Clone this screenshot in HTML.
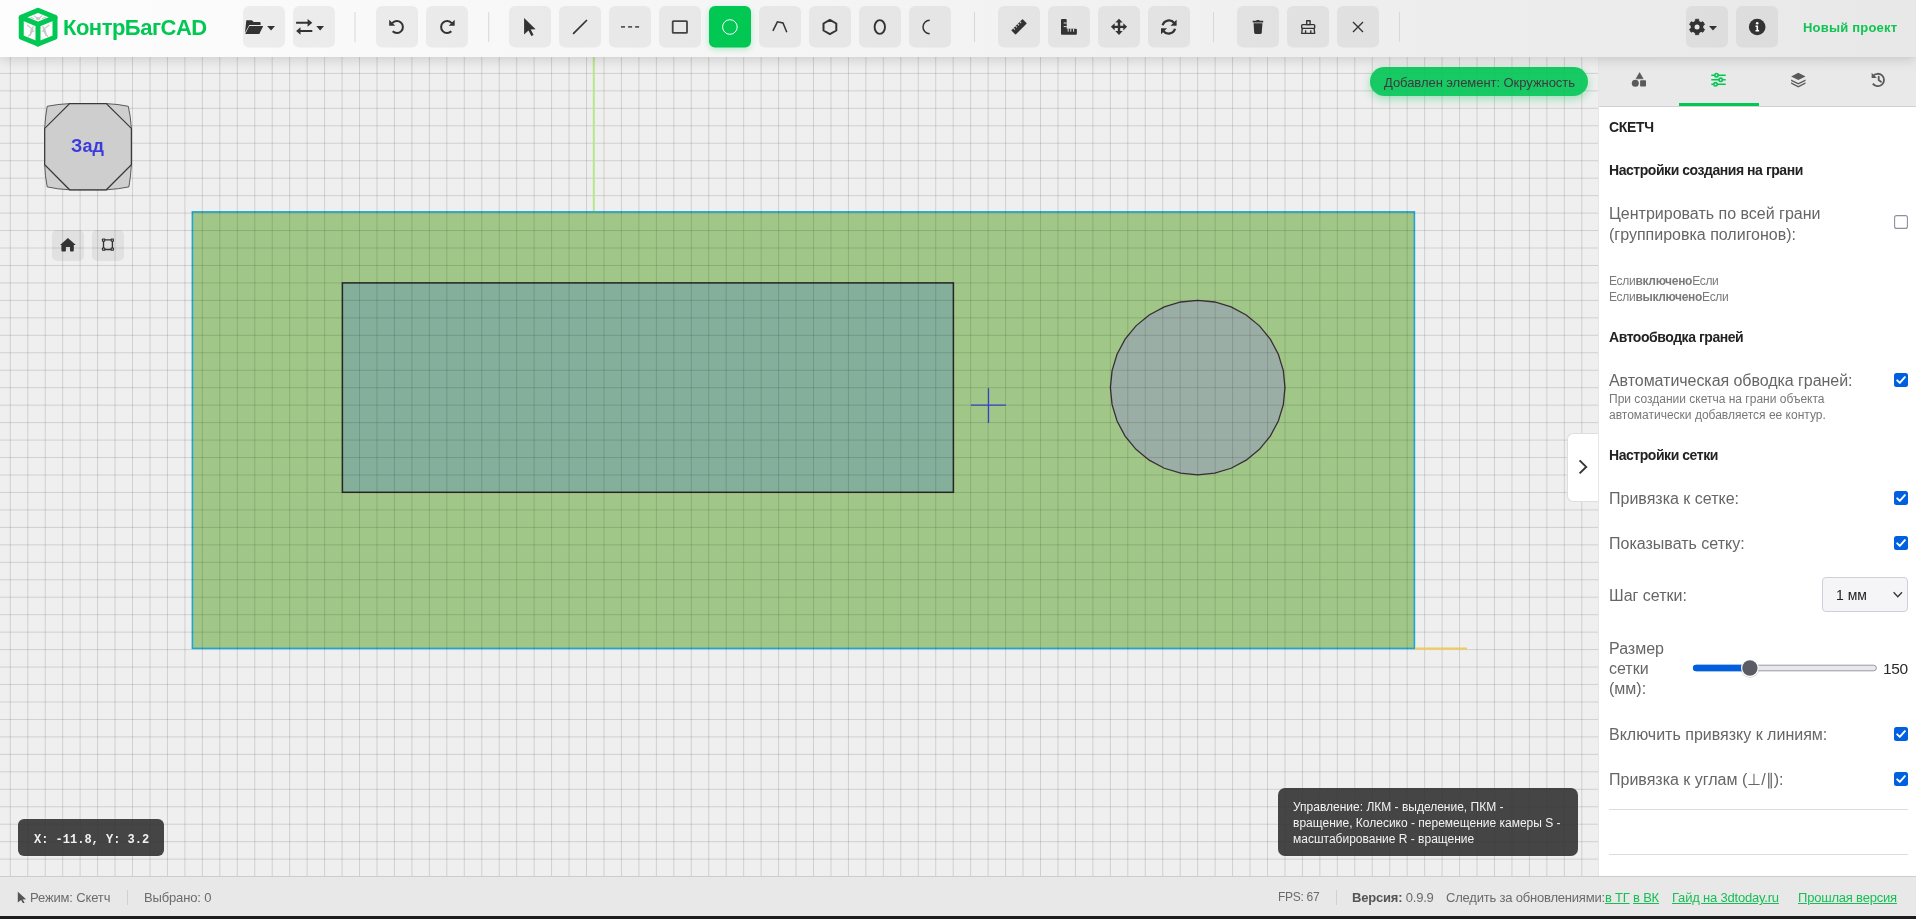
<!DOCTYPE html>
<html><head><meta charset="utf-8"><title>КонтрБагCAD</title><style>
*{box-sizing:border-box}
html,body{margin:0;padding:0;width:1916px;height:919px;overflow:hidden;background:#efefef;font-family:"Liberation Sans",sans-serif}
.t{position:absolute;white-space:nowrap;will-change:transform}
a{color:#16bf55;text-decoration:underline}
#hdr{position:absolute;left:0;top:0;width:1916px;height:57px;background:linear-gradient(90deg,#fdfdfd 0%,#f3f3f3 50%,#e8e8e8 100%);box-shadow:0 2px 12px rgba(0,0,0,0.16);z-index:5}
.logo-t{position:absolute;left:62.9px;top:15.4px;font-size:22px;line-height:26px;font-weight:bold;color:#00c853;letter-spacing:-0.5px;will-change:transform}
.newp{position:absolute;left:1803.2px;top:19px;font-size:13px;line-height:18px;font-weight:bold;color:#10c452;letter-spacing:0.2px;will-change:transform}
#pnl{position:absolute;left:1598px;top:57px;width:318px;height:819px;background:#fff;border-left:1px solid #e6e6e6}
#tabs{position:absolute;left:0;top:0;width:317px;height:49.5px;background:#e9e9e9;border-bottom:1px solid #d2d2d2}
#tabline{position:absolute;left:79.5px;top:46px;width:80px;height:3px;background:#00c853}
.cb{position:absolute}
#sel{position:absolute;left:1822.4px;top:577.3px;width:85.5px;height:34.4px;background:#f5f5f7;border:1px solid #cfcfd8;border-radius:4px}
.hr{position:absolute;left:1609px;width:299px;height:1px;background:#dcdcdc}
.vb{position:absolute;width:32px;height:31.5px;border-radius:5px;background:rgba(0,0,0,0.055)}
#note{position:absolute;left:1370.1px;top:67.2px;width:217.7px;height:28.5px;border-radius:14.25px;background:rgba(0,197,83,0.9);box-shadow:0 3px 10px rgba(0,190,80,0.35)}
#exp{position:absolute;left:1567px;top:432.5px;width:32px;height:69px;background:#fff;border:1px solid #dedede;border-right:none;border-radius:6px 0 0 6px}
#coord{position:absolute;left:18.2px;top:819.2px;width:145.7px;height:36.5px;border-radius:6px;background:rgba(50,50,50,0.9)}
#help{position:absolute;left:1278px;top:788.4px;width:300px;height:67.2px;border-radius:7px;background:rgba(50,50,50,0.9)}
#status{position:absolute;left:0;top:876px;width:1916px;height:39.5px;background:#e8e8e8;border-top:1px solid #cdcdcd}
#bottomline{position:absolute;left:0;top:915.5px;width:1916px;height:4px;background:#1d1d1d}
.vsep{position:absolute;top:890px;width:1px;height:15px;background:#d0d0d0}
</style></head>
<body>

<svg id="cv" width="1598" height="876" viewBox="0 0 1598 876" style="position:absolute;left:0;top:0">
 <rect x="0" y="0" width="1598" height="876" fill="#efefef"/>
 <rect x="192.4" y="211.9" width="1222" height="436.5" fill="#8bbb6a" fill-opacity="0.78" />
 <rect x="342.4" y="282.9" width="611" height="209.4" fill="#6f9fa8" fill-opacity="0.6" />
 <polygon points="1197.70,300.30 1214.73,301.98 1231.11,306.95 1246.20,315.01 1259.43,325.87 1270.29,339.10 1278.35,354.19 1283.32,370.57 1285.00,387.60 1283.32,404.63 1278.35,421.01 1270.29,436.10 1259.43,449.33 1246.20,460.19 1231.11,468.25 1214.73,473.22 1197.70,474.90 1180.67,473.22 1164.29,468.25 1149.20,460.19 1135.97,449.33 1125.11,436.10 1117.05,421.01 1112.08,404.63 1110.40,387.60 1112.08,370.57 1117.05,354.19 1125.11,339.10 1135.97,325.87 1149.20,315.01 1164.29,306.95 1180.67,301.98" fill="#9aa5b0" fill-opacity="0.75"/>
 <rect x="192.4" y="211.9" width="1222" height="436.5" fill="none" stroke="#1ea5d2" stroke-width="1.6"/>
 <rect x="342.4" y="282.9" width="611" height="209.4" fill="none" stroke="#2a2a2a" stroke-width="1.5"/>
 <polygon points="1197.70,300.30 1214.73,301.98 1231.11,306.95 1246.20,315.01 1259.43,325.87 1270.29,339.10 1278.35,354.19 1283.32,370.57 1285.00,387.60 1283.32,404.63 1278.35,421.01 1270.29,436.10 1259.43,449.33 1246.20,460.19 1231.11,468.25 1214.73,473.22 1197.70,474.90 1180.67,473.22 1164.29,468.25 1149.20,460.19 1135.97,449.33 1125.11,436.10 1117.05,421.01 1112.08,404.63 1110.40,387.60 1112.08,370.57 1117.05,354.19 1125.11,339.10 1135.97,325.87 1149.20,315.01 1164.29,306.95 1180.67,301.98" fill="none" stroke="#3a2f36" stroke-width="1.3"/>
 <path d="M10.30 57V876M27.76 57V876M45.22 57V876M62.68 57V876M80.14 57V876M97.60 57V876M115.07 57V876M132.53 57V876M149.99 57V876M167.45 57V876M184.91 57V876M202.37 57V876M219.83 57V876M237.29 57V876M254.75 57V876M272.21 57V876M289.68 57V876M307.14 57V876M324.60 57V876M342.06 57V876M359.52 57V876M376.98 57V876M394.44 57V876M411.90 57V876M429.36 57V876M446.82 57V876M464.29 57V876M481.75 57V876M499.21 57V876M516.67 57V876M534.13 57V876M551.59 57V876M569.05 57V876M586.51 57V876M603.97 57V876M621.43 57V876M638.90 57V876M656.36 57V876M673.82 57V876M691.28 57V876M708.74 57V876M726.20 57V876M743.66 57V876M761.12 57V876M778.58 57V876M796.04 57V876M813.51 57V876M830.97 57V876M848.43 57V876M865.89 57V876M883.35 57V876M900.81 57V876M918.27 57V876M935.73 57V876M953.19 57V876M970.65 57V876M988.12 57V876M1005.58 57V876M1023.04 57V876M1040.50 57V876M1057.96 57V876M1075.42 57V876M1092.88 57V876M1110.34 57V876M1127.80 57V876M1145.26 57V876M1162.73 57V876M1180.19 57V876M1197.65 57V876M1215.11 57V876M1232.57 57V876M1250.03 57V876M1267.49 57V876M1284.95 57V876M1302.41 57V876M1319.87 57V876M1337.34 57V876M1354.80 57V876M1372.26 57V876M1389.72 57V876M1407.18 57V876M1424.64 57V876M1442.10 57V876M1459.56 57V876M1477.02 57V876M1494.48 57V876M1511.95 57V876M1529.41 57V876M1546.87 57V876M1564.33 57V876M1581.79 57V876M0 55.94H1598M0 73.40H1598M0 90.86H1598M0 108.32H1598M0 125.78H1598M0 143.24H1598M0 160.70H1598M0 178.17H1598M0 195.63H1598M0 213.09H1598M0 230.55H1598M0 248.01H1598M0 265.47H1598M0 282.93H1598M0 300.39H1598M0 317.85H1598M0 335.31H1598M0 352.78H1598M0 370.24H1598M0 387.70H1598M0 405.16H1598M0 422.62H1598M0 440.08H1598M0 457.54H1598M0 475.00H1598M0 492.46H1598M0 509.92H1598M0 527.39H1598M0 544.85H1598M0 562.31H1598M0 579.77H1598M0 597.23H1598M0 614.69H1598M0 632.15H1598M0 649.61H1598M0 667.07H1598M0 684.53H1598M0 702.00H1598M0 719.46H1598M0 736.92H1598M0 754.38H1598M0 771.84H1598M0 789.30H1598M0 806.76H1598M0 824.22H1598M0 841.68H1598M0 859.14H1598" stroke="#000" stroke-opacity="0.13" stroke-width="1" fill="none"/>
 <path d="M988.5 388.2V423M971 405.1H1005.8" stroke="#3a3fc4" stroke-width="1.3"/>
 <path d="M593.8 57V211" stroke="#b8e68a" stroke-width="2"/>
 <path d="M1415 648.4H1467" stroke="#f0cb55" stroke-width="2"/>
</svg>
<svg style="position:absolute;left:38px;top:96px" width="100" height="100" viewBox="38 96 100 100">
 <path d="M69.6 103.6L106.3 103.6Q119 104.2 128.3 106.3Q130.6 116 131.4 128.4L131.4 164.8Q130.8 176 128.9 186.9Q119 189 106.3 189.8L69.6 189.8Q57 189.2 47.2 186.9Q45 176 44.7 164.8L44.7 128.4Q45.3 116 47.2 106.3Q57 104.2 69.6 103.6Z" fill="#cfcfcf" stroke="#3a3a3a" stroke-width="0.8"/>
 <path d="M69.6 103.6L106.3 103.6L131.4 128.4L131.4 164.8L106.3 189.8L69.6 189.8L44.7 164.8L44.7 128.4Z" fill="#cecece" stroke="#3a3a3a" stroke-width="1.25"/>
</svg><div class="t " style="left:71px;top:135.36px;font-size:18px;line-height:22px;color:#3b3bdb;font-weight:bold;letter-spacing:0.1px">Зад</div><div class="vb" style="left:52px;top:229.5px"></div><div class="vb" style="left:92px;top:229.5px"></div><svg style="position:absolute;left:52px;top:229px" width="72" height="32" viewBox="52 229 72 32">
 <path d="M67.9 238L75.8 244.9H73.8V250.6Q73.8 251.6 72.8 251.6H70.8Q70 251.6 70 250.8V247.1H65.9V250.8Q65.9 251.6 65.1 251.6H62.4Q61.4 251.6 61.4 250.6V244.9H60.1Z" fill="#333"/>
 <path d="M103.5 239.9V249.5M112.4 239.9V249.5M103.5 239.9H112.4M103.5 249.5H112.4" fill="none" stroke="#333" stroke-width="1.35"/>
 <g fill="#333"><rect x="101.9" y="238.4" width="3.4" height="3.4" rx="0.8"/><rect x="110.6" y="238.4" width="3.4" height="3.4" rx="0.8"/>
 <rect x="101.9" y="247.4" width="3.4" height="3.4" rx="0.8"/><rect x="110.6" y="247.4" width="3.4" height="3.4" rx="0.8"/></g>
 <g fill="#e2e2e2"><circle cx="103.6" cy="240.1" r="0.65"/><circle cx="112.3" cy="240.1" r="0.65"/><circle cx="103.6" cy="249.1" r="0.65"/><circle cx="112.3" cy="249.1" r="0.65"/></g>
</svg><div id="note"></div><div class="t " style="left:1384px;top:75.20px;font-size:13px;line-height:16px;color:#3f3a3f;font-weight:normal;letter-spacing:-0.05px">Добавлен элемент: Окружность</div><div id="exp"></div><svg style="position:absolute;left:1575px;top:458px" width="16" height="18" viewBox="0 0 16 18"><path d="M4.6 2.4L11.2 8.9L4.6 15.4" fill="none" stroke="#333" stroke-width="1.9"/></svg><div id="coord"></div><div class="t " style="left:33.8px;top:832.64px;font-size:12px;line-height:15px;color:#f2f2f2;font-weight:bold;font-family:'Liberation Mono',monospace;letter-spacing:0px">X: -11.8, Y: 3.2</div><div id="help"></div><div class="t " style="left:1293.3px;top:798.94px;font-size:12px;line-height:16px;color:#f4f4f4;font-weight:normal;">Управление: ЛКМ - выделение, ПКМ -<br>вращение, Колесико - перемещение камеры S -<br>масштабирование R - вращение</div>
<div id="pnl"><div id="tabs"></div><div id="tabline"></div></div><svg style="position:absolute;left:1598px;top:57px" width="318" height="50" viewBox="1598 57 318 50">
 <g fill="#5a5a5a">
  <path d="M1639.6 72.6L1643.2 78.8H1636Z" stroke="#5a5a5a" stroke-width="0.6" stroke-linejoin="round"/>
  <circle cx="1635.3" cy="83.3" r="3.5"/>
  <rect x="1640.1" y="80.2" width="5.9" height="6.3" rx="0.8"/>
 </g>
 <g stroke="#00c853" stroke-width="1.6" fill="none">
  <path d="M1711.3 75.2h14.4M1711.3 79.8h14.4M1711.3 84.3h14.4"/>
  <circle cx="1716.5" cy="75.2" r="1.7" fill="#e9e9e9"/>
  <circle cx="1720.7" cy="79.8" r="1.7" fill="#e9e9e9"/>
  <circle cx="1715.5" cy="84.3" r="1.7" fill="#e9e9e9"/>
 </g>
 <g fill="#5a5a5a">
  <path d="M1798.3 72.8l7.2 3.6-7.2 3.6-7.2-3.6z"/>
  <path d="M1791.1 79.4l7.2 3.6 7.2-3.6v1.5l-7.2 3.6-7.2-3.6z"/>
  <path d="M1791.1 82.3l7.2 3.6 7.2-3.6v1.5l-7.2 3.6-7.2-3.6z"/>
 </g>
 <g fill="none" stroke="#5a5a5a" stroke-width="1.8">
  <path d="M1872.9 76.2A6.2 6.2 0 1 1 1872.8 83.6"/>
  <path d="M1878.7 76.6v3.5l2.3 1.6" stroke-linecap="round"/>
 </g>
 <path d="M1871.6 72.7v5.3h5.3z" fill="#5a5a5a"/>
</svg><div class="t " style="left:1609px;top:118.35px;font-size:14px;line-height:18px;color:#222;font-weight:bold;letter-spacing:-0.3px">СКЕТЧ</div><div class="t " style="left:1609px;top:160.75px;font-size:14px;line-height:18px;color:#222;font-weight:bold;letter-spacing:-0.45px">Настройки создания на грани</div><div class="t " style="left:1609px;top:203.06px;font-size:16px;line-height:21.2px;color:#666;font-weight:normal;">Центрировать по всей грани<br>(группировка полигонов):</div><svg class="cb" style="left:1894.1px;top:214.9px" width="14" height="14" viewBox="0 0 14 14"><rect x="0.6" y="0.6" width="12.8" height="12.8" rx="2" fill="#fff" stroke="#8f8f9d" stroke-width="1.1"/></svg><div class="t " style="left:1609px;top:272.94px;font-size:12px;line-height:16px;color:#7a7a7a;font-weight:normal;letter-spacing:-0.3px">Если<b>включено</b>Если<br>Если<b>выключено</b>Если</div><div class="t " style="left:1609px;top:328.25px;font-size:14px;line-height:18px;color:#222;font-weight:bold;letter-spacing:-0.45px">Автообводка граней</div><div class="t " style="left:1609px;top:370.96px;font-size:16px;line-height:20px;color:#666;font-weight:normal;letter-spacing:-0.05px">Автоматическая обводка граней:</div><svg class="cb" style="left:1893.9px;top:372.9px" width="14" height="14" viewBox="0 0 14 14"><rect x="0" y="0" width="14" height="14" rx="2.5" fill="#0060df"/><path d="M3.2 7.3L5.8 9.9L10.9 4.1" fill="none" stroke="#fff" stroke-width="1.9" stroke-linecap="round" stroke-linejoin="round"/></svg><div class="t " style="left:1609px;top:391.64px;font-size:12px;line-height:15.8px;color:#777;font-weight:normal;">При создании скетча на грани объекта<br>автоматически добавляется ее контур.</div><div class="t " style="left:1609px;top:446.05px;font-size:14px;line-height:18px;color:#222;font-weight:bold;letter-spacing:-0.45px">Настройки сетки</div><div class="t " style="left:1609px;top:489.26px;font-size:16px;line-height:20px;color:#666;font-weight:normal;">Привязка к сетке:</div><svg class="cb" style="left:1893.9px;top:491.2px" width="14" height="14" viewBox="0 0 14 14"><rect x="0" y="0" width="14" height="14" rx="2.5" fill="#0060df"/><path d="M3.2 7.3L5.8 9.9L10.9 4.1" fill="none" stroke="#fff" stroke-width="1.9" stroke-linecap="round" stroke-linejoin="round"/></svg><div class="t " style="left:1609px;top:534.46px;font-size:16px;line-height:20px;color:#666;font-weight:normal;">Показывать сетку:</div><svg class="cb" style="left:1893.9px;top:535.8px" width="14" height="14" viewBox="0 0 14 14"><rect x="0" y="0" width="14" height="14" rx="2.5" fill="#0060df"/><path d="M3.2 7.3L5.8 9.9L10.9 4.1" fill="none" stroke="#fff" stroke-width="1.9" stroke-linecap="round" stroke-linejoin="round"/></svg><div class="t " style="left:1609px;top:586.46px;font-size:16px;line-height:20px;color:#666;font-weight:normal;">Шаг сетки:</div><div id="sel"></div><div class="t " style="left:1836px;top:586.15px;font-size:14px;line-height:18px;color:#222;font-weight:normal;">1 мм</div><svg style="position:absolute;left:1890px;top:588px" width="16" height="14" viewBox="0 0 16 14"><path d="M3.6 4.3L7.8 8.8L12 4.3" fill="none" stroke="#333" stroke-width="1.3"/></svg><div class="t " style="left:1609px;top:638.56px;font-size:16px;line-height:20.2px;color:#666;font-weight:normal;">Размер<br>сетки<br>(мм):</div><svg style="position:absolute;left:1688px;top:656px" width="196" height="24" viewBox="1688 656 196 24">
 <rect x="1693.4" y="665.2" width="183" height="5.6" rx="2.8" fill="#e9e9ed" stroke="#8f8f9d" stroke-width="0.9"/>
 <rect x="1692.9" y="664.8" width="58" height="6.4" rx="3.2" fill="#0060df"/>
 <circle cx="1749.9" cy="668.7" r="9.3" fill="#000" opacity="0.12"/>
 <circle cx="1749.9" cy="668" r="8.9" fill="#fff" />
 <circle cx="1749.9" cy="668" r="7.7" fill="#5b5b66"/>
</svg><div class="t " style="left:1882.8px;top:659.13px;font-size:15.5px;line-height:19px;color:#2a2a2a;font-weight:normal;letter-spacing:-0.4px">150</div><div class="t " style="left:1609px;top:725.06px;font-size:16px;line-height:20px;color:#666;font-weight:normal;">Включить привязку к линиям:</div><svg class="cb" style="left:1893.9px;top:726.9px" width="14" height="14" viewBox="0 0 14 14"><rect x="0" y="0" width="14" height="14" rx="2.5" fill="#0060df"/><path d="M3.2 7.3L5.8 9.9L10.9 4.1" fill="none" stroke="#fff" stroke-width="1.9" stroke-linecap="round" stroke-linejoin="round"/></svg><div class="t " style="left:1609px;top:769.76px;font-size:16px;line-height:20px;color:#666;font-weight:normal;">Привязка к углам (⊥/∥):</div><svg class="cb" style="left:1893.9px;top:771.8px" width="14" height="14" viewBox="0 0 14 14"><rect x="0" y="0" width="14" height="14" rx="2.5" fill="#0060df"/><path d="M3.2 7.3L5.8 9.9L10.9 4.1" fill="none" stroke="#fff" stroke-width="1.9" stroke-linecap="round" stroke-linejoin="round"/></svg><div class="hr" style="top:809px"></div><div class="hr" style="top:854px"></div>
<div id="status"></div><div id="bottomline"></div><svg style="position:absolute;left:17px;top:891px" width="11" height="12" viewBox="0 0 11 12"><path d="M0.8 0.8L9.1 8.2L5.6 8.4L7.6 11.6L6 12.4L4.1 9.1L0.8 11.4Z" fill="#555"/></svg><div class="t " style="left:30.3px;top:889.80px;font-size:13px;line-height:16px;color:#6b6b6b;font-weight:normal;letter-spacing:-0.15px">Режим: Скетч</div><div class="vsep" style="left:127px"></div><div class="t " style="left:144px;top:889.80px;font-size:13px;line-height:16px;color:#6b6b6b;font-weight:normal;letter-spacing:-0.15px">Выбрано: 0</div><div class="t " style="left:1277.7px;top:890.34px;font-size:12px;line-height:15px;color:#6b6b6b;font-weight:normal;letter-spacing:-0.3px">FPS: 67</div><div class="vsep" style="left:1335.5px"></div><div class="t " style="left:1352px;top:889.50px;font-size:13px;line-height:16px;color:#6b6b6b;font-weight:normal;letter-spacing:-0.2px"><b style='color:#555'>Версия:</b> 0.9.9</div><div class="t " style="left:1445.7px;top:889.50px;font-size:13px;line-height:16px;color:#6b6b6b;font-weight:normal;letter-spacing:-0.2px">Следить за обновлениями:<a>в ТГ</a> <a>в ВК</a></div><div class="t " style="left:1672.4px;top:889.50px;font-size:13px;line-height:16px;color:#6b6b6b;font-weight:normal;letter-spacing:-0.2px"><a>Гайд на 3dtoday.ru</a></div><div class="t " style="left:1798.4px;top:889.50px;font-size:13px;line-height:16px;color:#6b6b6b;font-weight:normal;letter-spacing:-0.2px"><a>Прошлая версия</a></div>

<div id="hdr">
<svg width="1916" height="57" viewBox="0 0 1916 57" style="position:absolute;left:0;top:0">
 
<g stroke="#c4c4c4" stroke-width="1.1" fill="none" stroke-linecap="round">
 <ellipse cx="38.1" cy="18.6" rx="2.2" ry="1.5" fill="#c8c8c8" stroke="none"/>
 <path d="M34.4 15.9L36.6 17.8M41.7 15.9L39.6 17.8M30.6 17.6L33.8 18.6M45.5 17.6L42.4 18.6"/>
 <path d="M33.2 26.6L30.2 35.6M27.4 25.2L31.6 28.6M28.5 36.3L30.4 34M34.2 31L31.2 31.6"/>
 <path d="M43 26.6L46 35.6M48.8 25.2L44.6 28.6M47.7 36.3L45.8 34M42 31L45 31.6"/>
 <ellipse cx="31.6" cy="30.8" rx="1.3" ry="3.6" transform="rotate(18 31.6 30.8)" fill="#c8c8c8" stroke="none"/>
 <ellipse cx="44.6" cy="30.8" rx="1.3" ry="3.6" transform="rotate(-18 44.6 30.8)" fill="#c8c8c8" stroke="none"/>
</g>
<g fill="none" stroke="#00c853" stroke-width="5" stroke-linejoin="round" stroke-linecap="round">
 <path d="M38 10.3L55 17.3V37.2L38 44L21.25 37.2V17.3Z"/>
 <path d="M21.25 17.4L38 24.4L55 17.4M38 24.4V44"/>
</g>

 <rect x="243" y="6" width="42" height="41.6" rx="6" fill="#000" fill-opacity="0.055"/><rect x="293" y="6" width="42" height="41.6" rx="6" fill="#000" fill-opacity="0.055"/><rect x="376" y="6" width="42" height="41.6" rx="6" fill="#000" fill-opacity="0.055"/><rect x="426" y="6" width="42" height="41.6" rx="6" fill="#000" fill-opacity="0.055"/><rect x="509" y="6" width="42" height="41.6" rx="6" fill="#000" fill-opacity="0.055"/><rect x="559" y="6" width="42" height="41.6" rx="6" fill="#000" fill-opacity="0.055"/><rect x="609" y="6" width="42" height="41.6" rx="6" fill="#000" fill-opacity="0.055"/><rect x="659" y="6" width="42" height="41.6" rx="6" fill="#000" fill-opacity="0.055"/><rect x="759" y="6" width="42" height="41.6" rx="6" fill="#000" fill-opacity="0.055"/><rect x="809" y="6" width="42" height="41.6" rx="6" fill="#000" fill-opacity="0.055"/><rect x="859" y="6" width="42" height="41.6" rx="6" fill="#000" fill-opacity="0.055"/><rect x="909" y="6" width="42" height="41.6" rx="6" fill="#000" fill-opacity="0.055"/><rect x="998" y="6" width="42" height="41.6" rx="6" fill="#000" fill-opacity="0.055"/><rect x="1048" y="6" width="42" height="41.6" rx="6" fill="#000" fill-opacity="0.055"/><rect x="1098" y="6" width="42" height="41.6" rx="6" fill="#000" fill-opacity="0.055"/><rect x="1148" y="6" width="42" height="41.6" rx="6" fill="#000" fill-opacity="0.055"/><rect x="1237" y="6" width="42" height="41.6" rx="6" fill="#000" fill-opacity="0.055"/><rect x="1287" y="6" width="42" height="41.6" rx="6" fill="#000" fill-opacity="0.055"/><rect x="1337" y="6" width="42" height="41.6" rx="6" fill="#000" fill-opacity="0.055"/><rect x="1686" y="6" width="42" height="41.6" rx="6" fill="#000" fill-opacity="0.055"/><rect x="1736" y="6" width="42" height="41.6" rx="6" fill="#000" fill-opacity="0.055"/>
 <defs><filter id="gl" x="-50%" y="-50%" width="200%" height="200%"><feGaussianBlur stdDeviation="3"/></filter></defs><rect x="709" y="8" width="42" height="41.6" rx="6" fill="#00c853" opacity="0.28" filter="url(#gl)"/><rect x="709" y="6" width="42" height="41.6" rx="6" fill="#00c853"/>
 <path d="M355 12V42" stroke="#d8d8d8" stroke-width="1"/><path d="M488.7 12V42" stroke="#d8d8d8" stroke-width="1"/><path d="M974.5 12V42" stroke="#d8d8d8" stroke-width="1"/><path d="M1213.5 12V42" stroke="#d8d8d8" stroke-width="1"/><path d="M1399.5 12V42" stroke="#d8d8d8" stroke-width="1"/>
 
<g fill="#333">
 <!-- folder open -->
 <path d="M246.3 20.2h5.6l1.8 1.9h6q0.9 0 0.9 0.9v2.1h-11.4l-4.2 7.6z"/>
 <path d="M249.3 25.9h13.9l-3.9 8.1h-14.1z"/>
 <path d="M267.1 25.9h7.9l-3.95 4.7z"/>
 <!-- exchange -->
 <path d="M296.1 21.8h12v2h-12z M307.6 19.1l4.7 3.7-4.7 3.9z"/>
 <path d="M300.5 29.9h11.8v2h-11.8z M300.5 27.2l-4.4 3.7 4.4 3.9z"/>
 <path d="M316.3 25.9h7.7l-3.85 4.7z"/>
 <!-- undo -->
 <path d="M392.66 31.24A6 6 0 1 0 392.3 23.1" fill="none" stroke="#333" stroke-width="2"/>
 <path d="M389.2 19.7v6h6z"/>
 <!-- redo -->
 <path d="M451.34 31.24A6 6 0 1 1 451.7 23.1" fill="none" stroke="#333" stroke-width="2"/>
 <path d="M454.7 19.7v6h-6z"/>
 <!-- pointer -->
 <path d="M524.1 17.9L535.6 29.2L530.7 29.6L533.6 35L531.3 36L528.5 30.6L524.1 34.4Z"/>
</g>
<g fill="none" stroke="#333">
 <path d="M573.6 33.4L586.5 20.5" stroke-width="1.7" stroke-linecap="round"/>
 <path d="M621 26.9h4M628.1 26.9h4M635.1 26.9h4" stroke="#585858" stroke-width="1.7"/>
 <rect x="672.7" y="21.1" width="14.3" height="11.7" rx="0.6" stroke="#444" stroke-width="1.8"/>
 <circle cx="729.9" cy="27" r="7.3" stroke="#fff" stroke-width="1"/>
 <path d="M772.9 30.9L777.4 21.8L783 23L786.8 32.2" stroke-width="1.5"/>
 <path d="M829.9 19.9L836.3 23.5V30.5L829.9 34.1L823.5 30.5V23.5Z" stroke-width="2" stroke-linejoin="round"/>
 <ellipse cx="879.8" cy="27" rx="5.2" ry="6.9" stroke-width="1.9"/>
 <path d="M929.7 20.3A6.7 6.7 0 0 0 929.7 33.7" stroke-width="1.5"/>
 <path d="M1353 21.9L1363 31.9M1363 21.9L1353 31.9" stroke-width="1.4"/>
</g>
<g fill="#333">
 <!-- ruler -->
 <g transform="rotate(-45 1019.05 26.9)">
  <rect x="1011" y="23.8" width="16.1" height="6.2" rx="1"/>
  <path d="M1014.2 23.8v2M1017.2 23.8v2M1020.2 23.8v2M1023.2 23.8v2" stroke="#e4e4e4" stroke-width="0.95"/>
 </g>
 <!-- ruler combined -->
 <path d="M1062 19.1h3.7q1 0 1 1v8.7h9.2q1 0 1 1v3.9q0 1-1 1h-13.9q-1 0-1-1v-13.6q0-1 1-1z"/>
 <path d="M1063.7 23h3M1063.7 26.6h3M1070.8 28.8v2.9M1073.6 28.8v2.9M1074.2 28.8v0" stroke="#e4e4e4" stroke-width="1"/>
 <path d="M1068.2 28.8v2.9" stroke="#e4e4e4" stroke-width="1"/>
 <!-- move -->
 <path d="M1119 18.7l3.7 3.9h-2.5v3.1h3.1v-2.5l3.8 3.65-3.8 3.65v-2.5h-3.1v3.1h2.5l-3.7 3.9-3.7-3.9h2.5v-3.1h-3.1v2.5l-3.8-3.65 3.8-3.65v2.5h3.1v-3.1h-2.5z"/>
 <!-- sync -->
 <path d="M1162.6 25.2A6.6 6.6 0 0 1 1174.2 23" fill="none" stroke="#333" stroke-width="2.3"/>
 <path d="M1176.6 19.7v6.1h-6.1z"/>
 <path d="M1175 28.8A6.6 6.6 0 0 1 1163.4 31" fill="none" stroke="#333" stroke-width="2.3"/>
 <path d="M1161 34.3v-6.1h6.1z"/>
 <!-- trash -->
 <path d="M1252.7 20.8h3.4l0.6-0.9h2.4l0.6 0.9h3.5v1.6h-10.5z"/>
 <path d="M1253.6 23.2h8.8l-0.6 9.6q-0.1 1.1-1.2 1.1h-5.2q-1.1 0-1.2-1.1z"/>
 <!-- broom -->
 <g fill="none" stroke="#333" stroke-width="1.35" stroke-linejoin="round">
  <rect x="1306.7" y="20.7" width="3.4" height="3.9"/>
  <rect x="1301.7" y="24.6" width="13" height="3.8" rx="0.9"/>
  <path d="M1302.3 28.4L1301.7 33.3H1314.7L1314.1 28.4M1305.6 30.2V33.3M1310.8 30.2V33.3"/>
 </g>
 <!-- gear -->
 <g transform="translate(1697.05 26.95)">
  <circle r="6.3"/>
  <g stroke="#333" stroke-width="0.8" stroke-linejoin="round">
   <rect x="-1.75" y="-7.7" width="3.5" height="4" rx="0.4"/>
   <rect x="-1.75" y="-7.7" width="3.5" height="4" rx="0.4" transform="rotate(60)"/>
   <rect x="-1.75" y="-7.7" width="3.5" height="4" rx="0.4" transform="rotate(120)"/>
   <rect x="-1.75" y="-7.7" width="3.5" height="4" rx="0.4" transform="rotate(180)"/>
   <rect x="-1.75" y="-7.7" width="3.5" height="4" rx="0.4" transform="rotate(240)"/>
   <rect x="-1.75" y="-7.7" width="3.5" height="4" rx="0.4" transform="rotate(300)"/>
  </g>
  <circle r="2.5" fill="#e6e6e6"/>
 </g>
 <path d="M1709 25.9h8l-4 4.7z"/>
 <!-- info -->
 <circle cx="1757.2" cy="27" r="8.3"/>
 <circle cx="1757.2" cy="23.3" r="1.25" fill="#fff"/>
 <path d="M1755.5 25.4h2.6v4.6h1v1.5h-3.6v-1.5h1v-3.1h-1z" fill="#fff"/>
</g>

</svg>
<div class="logo-t">КонтрБагCAD</div>
<div class="newp">Новый проект</div>
</div>
</body></html>
